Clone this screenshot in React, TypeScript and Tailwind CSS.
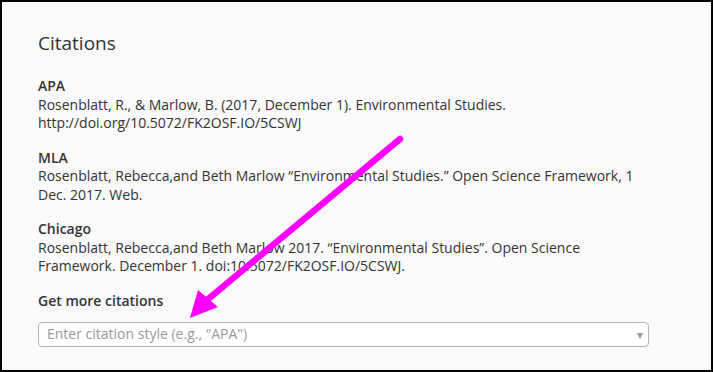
import React from "react";

const blocks = [
  {
    label: "APA",
    text: "Rosenblatt, R., & Marlow, B. (2017, December 1). Environmental Studies. http://doi.org/10.5072/FK2OSF.IO/5CSWJ",
  },
  {
    label: "MLA",
    text: "Rosenblatt, Rebecca,and Beth Marlow \u201cEnvironmental Studies.\u201d Open Science Framework, 1 Dec. 2017. Web.",
  },
  {
    label: "Chicago",
    text: "Rosenblatt, Rebecca,and Beth Marlow 2017. \u201cEnvironmental Studies\u201d. Open Science Framework. December 1. doi:10.5072/FK2OSF.IO/5CSWJ.",
  },
];

export default function App() {
  return (
    <div className="relative w-[713px] h-[372px] overflow-hidden border-2 border-black bg-[#fafafa] font-['Open_Sans',sans-serif] text-[#333]">
      <div className="pt-[29px] pl-[36px] w-[647px]">
        <h2 className="text-[19px] leading-[24px] font-normal">Citations</h2>
        <div className="mt-[22px] flex flex-col gap-4">
          {blocks.map((b) => (
            <div key={b.label} className="text-[14px] leading-[18.5px]">
              <div className="font-semibold">{b.label}</div>
              <div>{b.text}</div>
            </div>
          ))}
          <div className="text-[14px] leading-[18.5px]">
            <div className="font-semibold">Get more citations</div>
            <div className="mt-[12px] relative h-[25px] w-[611px] rounded-[4px] border border-[#b3b3b3] bg-white flex items-center pl-[8px]">
              <span className="text-[#999] text-[14px]">Enter citation style (e.g., "APA")</span>
              <span className="absolute right-[5px] top-[10px] w-0 h-0 border-l-[3.5px] border-r-[3.5px] border-t-[6px] border-l-transparent border-r-transparent border-t-[#999]" />
            </div>
          </div>
        </div>
      </div>
      <svg
        className="absolute left-[-2px] top-[-2px] pointer-events-none"
        width="713"
        height="372"
        viewBox="0 0 713 372"
      >
        <line x1="400" y1="139" x2="207" y2="300" stroke="#ff00ff" strokeWidth="6.5" strokeLinecap="round" />
        <polygon points="190,318 198,290 218,307" fill="#ff00ff" />
      </svg>
    </div>
  );
}
